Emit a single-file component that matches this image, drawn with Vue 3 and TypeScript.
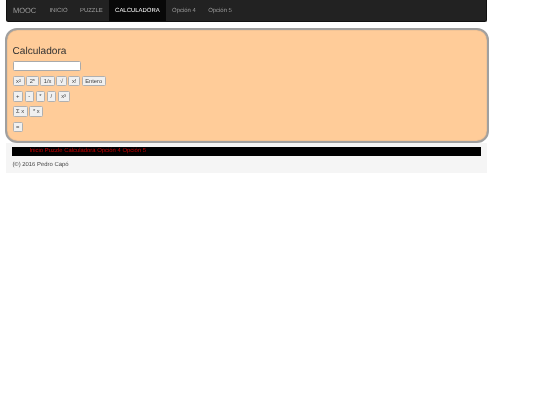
<script setup lang="ts">
const nav = [
  { label: 'INICIO', active: false },
  { label: 'PUZZLE', active: false },
  { label: 'CALCULADORA', active: true },
  { label: 'Opción 4', active: false },
  { label: 'Opción 5', active: false },
]
const rows = [
  ['x²', '2ⁿ', '1/x', '√', 'x!', 'Entero'],
  ['+', '-', '*', '/', 'x³'],
  ['Σ x', '* x'],
  ['='],
]
</script>

<template>
  <div class="page">
    <nav class="navbar">
      <span class="brand">MOOC</span>
      <a v-for="n in nav" :key="n.label" class="link" :class="{ active: n.active }">{{ n.label }}</a>
    </nav>
    <main class="panel">
      <h2 class="title">Calculadora</h2>
      <input class="field" type="text" />
      <div v-for="(r, i) in rows" :key="i" class="row">
        <button v-for="b in r" :key="b" class="btn">{{ b }}</button>
      </div>
    </main>
    <footer class="footer">
      <div class="bar">
        <span>Inicio</span> <span>Puzzle</span> <span>Calculadora</span> <span>Opción 4</span> <span>Opción 5</span>
      </div>
      <p class="copy">(©) 2016 Pedro Capó</p>
    </footer>
  </div>
</template>

<style>
html, body { margin: 0; background: #fff; }
</style>

<style scoped>
.page {
  width: 540px;
  height: 405px;
  overflow: hidden;
  font-family: "Liberation Sans", Arial, sans-serif;
  color: #333;
  font-size: 6px;
  filter: blur(0.3px);
  text-rendering: geometricPrecision;
}
.navbar {
  width: 481px;
  height: 22px;
  margin-left: 6.4px;
  box-sizing: border-box;
  background: #222;
  border: 1px solid #111;
  border-top: 0;
  border-radius: 0 0 2.5px 2.5px;
  display: flex;
  align-items: stretch;
  padding-left: 5.5px;
}
.brand {
  font-size: 7.5px;
  color: #9d9d9d;
  line-height: 20px;
  padding-top: 1px;
  margin-right: 7px;
}
.link {
  font-size: 5.95px;
  color: #9d9d9d;
  line-height: 20px;
  padding: 1px 6.2px 0;
}
.link.active {
  color: #fff;
  background: #080808;
}
.panel {
  width: 484.3px;
  height: 115.3px;
  box-sizing: border-box;
  margin: 6px 0 0 5px;
  padding: 15px 5.5px 0;
  background: #fc9;
  border: 2px solid #a0a0a0;
  border-radius: 12px;
  box-shadow: inset 0 0 1px #777;
}
.title {
  margin: 0 0 2.7px;
  font-size: 10.1px;
  font-weight: 400;
  line-height: 13px;
  color: #333;
}
.field {
  display: block;
  width: 68.8px;
  height: 10.6px;
  box-sizing: border-box;
  padding: 0;
  background: #fff;
  border: 1px solid #aaa;
  border-radius: 1.5px;
  margin-bottom: 4.4px;
}
.row {
  display: flex;
  gap: 1.5px;
  margin-bottom: 4.7px;
}
.btn {
  height: 10.6px;
  padding: 0 2.6px;
  min-width: 9.5px;
  box-sizing: border-box;
  font: 5.8px/9px "Liberation Sans", Arial, sans-serif;
  color: #444;
  background: #f0f0f0;
  border: 1px solid #b0b0b0;
  border-radius: 1.5px;
}
.footer {
  width: 480.5px;
  height: 29.4px;
  margin-left: 6.4px;
  box-sizing: border-box;
  background: #f5f5f5;
  padding: 4px 6px 0;
}
.bar {
  height: 8.4px;
  background: #000;
  color: #c00;
  font-size: 5.9px;
  line-height: 8.4px;
  padding-left: 17px;
}
.copy {
  margin: 5.5px 0 0;
  font-size: 5.9px;
  line-height: 8px;
  color: #444;
}
</style>
